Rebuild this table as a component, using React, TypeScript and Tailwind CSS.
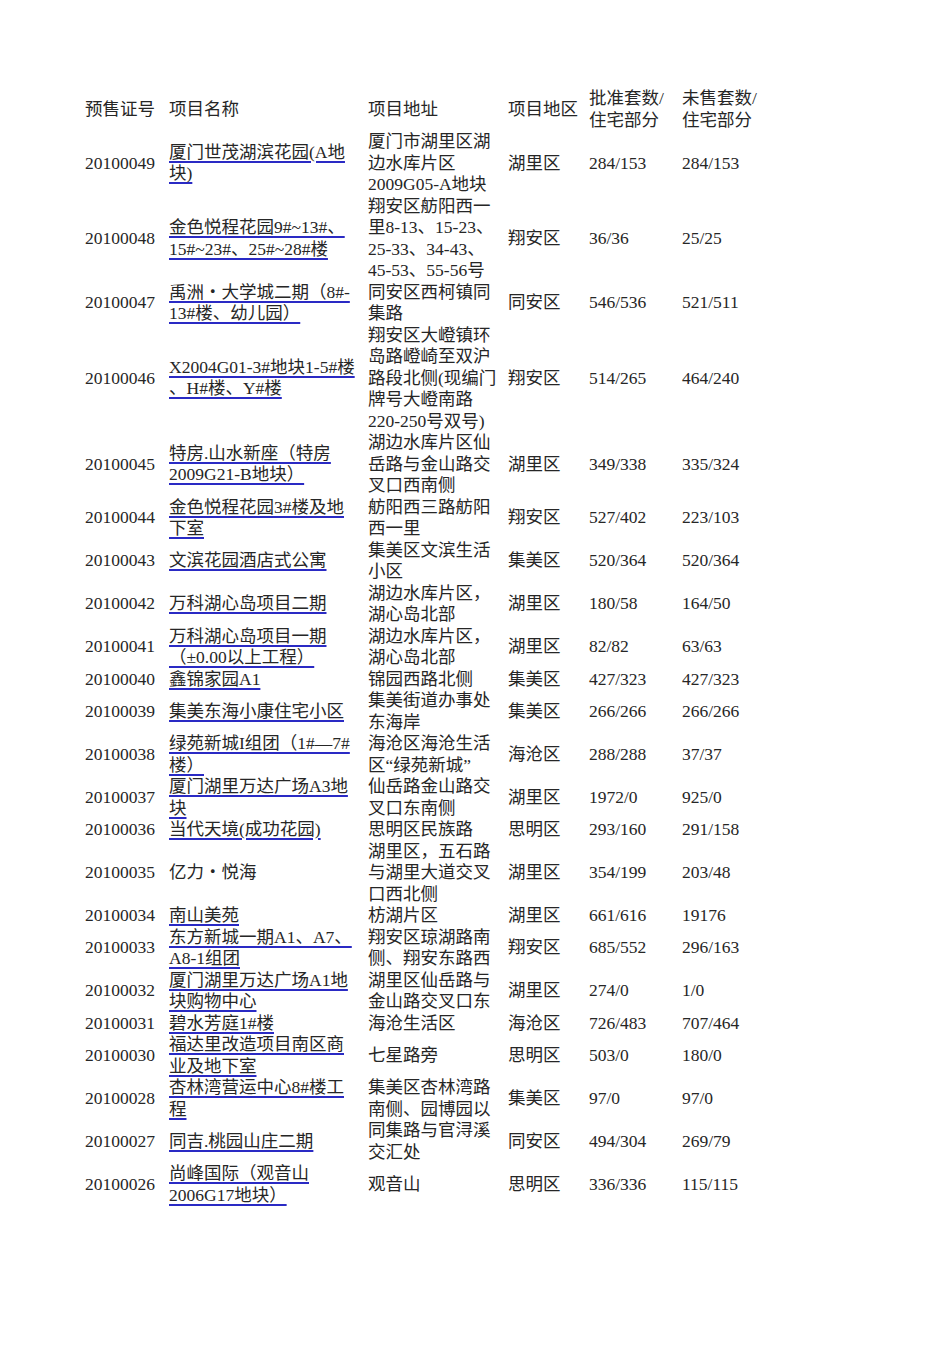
import React from 'react';

type Row = {
  no: string;
  name: string[];
  link?: boolean;
  addr: string[];
  area: string;
  approved: string;
  unsold: string;
};

// 预售项目列表 (lines are broken by hand, as in the source sheet)
const rows: Row[] = [
  { no: '20100049', name: ['厦门世茂湖滨花园(A地', '块)'], addr: ['厦门市湖里区湖', '边水库片区', '2009G05-A地块'], area: '湖里区', approved: '284/153', unsold: '284/153' },
  { no: '20100048', name: ['金色悦程花园9#~13#、', '15#~23#、25#~28#楼'], addr: ['翔安区舫阳西一', '里8-13、15-23、', '25-33、34-43、', '45-53、55-56号'], area: '翔安区', approved: '36/36', unsold: '25/25' },
  { no: '20100047', name: ['禹洲・大学城二期（8#-', '13#楼、幼儿园）'], addr: ['同安区西柯镇同', '集路'], area: '同安区', approved: '546/536', unsold: '521/511' },
  { no: '20100046', name: ['X2004G01-3#地块1-5#楼', '、H#楼、Y#楼'], addr: ['翔安区大嶝镇环', '岛路嶝崎至双沪', '路段北侧(现编门', '牌号大嶝南路', '220-250号双号)'], area: '翔安区', approved: '514/265', unsold: '464/240' },
  { no: '20100045', name: ['特房.山水新座（特房', '2009G21-B地块）'], addr: ['湖边水库片区仙', '岳路与金山路交', '叉口西南侧'], area: '湖里区', approved: '349/338', unsold: '335/324' },
  { no: '20100044', name: ['金色悦程花园3#楼及地', '下室'], addr: ['舫阳西三路舫阳', '西一里'], area: '翔安区', approved: '527/402', unsold: '223/103' },
  { no: '20100043', name: ['文滨花园酒店式公寓'], addr: ['集美区文滨生活', '小区'], area: '集美区', approved: '520/364', unsold: '520/364' },
  { no: '20100042', name: ['万科湖心岛项目二期'], addr: ['湖边水库片区，', '湖心岛北部'], area: '湖里区', approved: '180/58', unsold: '164/50' },
  { no: '20100041', name: ['万科湖心岛项目一期', '（±0.00以上工程）'], addr: ['湖边水库片区，', '湖心岛北部'], area: '湖里区', approved: '82/82', unsold: '63/63' },
  { no: '20100040', name: ['鑫锦家园A1'], addr: ['锦园西路北侧'], area: '集美区', approved: '427/323', unsold: '427/323' },
  { no: '20100039', name: ['集美东海小康住宅小区'], addr: ['集美街道办事处', '东海岸'], area: '集美区', approved: '266/266', unsold: '266/266' },
  { no: '20100038', name: ['绿苑新城I组团（1#—7#', '楼）'], addr: ['海沧区海沧生活', '区“绿苑新城”'], area: '海沧区', approved: '288/288', unsold: '37/37' },
  { no: '20100037', name: ['厦门湖里万达广场A3地', '块'], addr: ['仙岳路金山路交', '叉口东南侧'], area: '湖里区', approved: '1972/0', unsold: '925/0' },
  { no: '20100036', name: ['当代天境(成功花园)'], addr: ['思明区民族路'], area: '思明区', approved: '293/160', unsold: '291/158' },
  { no: '20100035', name: ['亿力・悦海'], link: false, addr: ['湖里区，五石路', '与湖里大道交叉', '口西北侧'], area: '湖里区', approved: '354/199', unsold: '203/48' },
  { no: '20100034', name: ['南山美苑'], addr: ['枋湖片区'], area: '湖里区', approved: '661/616', unsold: '19176' },
  { no: '20100033', name: ['东方新城一期A1、A7、', 'A8-1组团'], addr: ['翔安区琼湖路南', '侧、翔安东路西'], area: '翔安区', approved: '685/552', unsold: '296/163' },
  { no: '20100032', name: ['厦门湖里万达广场A1地', '块购物中心'], addr: ['湖里区仙岳路与', '金山路交叉口东'], area: '湖里区', approved: '274/0', unsold: '1/0' },
  { no: '20100031', name: ['碧水芳庭1#楼'], addr: ['海沧生活区'], area: '海沧区', approved: '726/483', unsold: '707/464' },
  { no: '20100030', name: ['福达里改造项目南区商', '业及地下室'], addr: ['七星路旁'], area: '思明区', approved: '503/0', unsold: '180/0' },
  { no: '20100028', name: ['杏林湾营运中心8#楼工', '程'], addr: ['集美区杏林湾路', '南侧、园博园以'], area: '集美区', approved: '97/0', unsold: '97/0' },
  { no: '20100027', name: ['同吉.桃园山庄二期'], addr: ['同集路与官浔溪', '交汇处'], area: '同安区', approved: '494/304', unsold: '269/79' },
  { no: '20100026', name: ['尚峰国际（观音山', '2006G17地块）'], addr: ['观音山'], area: '思明区', approved: '336/336', unsold: '115/115' },
];

const Lines = ({ lines, link }: { lines: string[]; link?: boolean }) => (
  <>
    {lines.map((l, i) => (
      <div key={i} className="whitespace-nowrap">
        <span className={link ? 'underline decoration-[#2a2ac4] decoration-2 underline-offset-[3px]' : ''}>{l}</span>
      </div>
    ))}
  </>
);

const App = () => {
  return (
    <div
      className="min-h-[1345px] w-[950px] bg-white pt-[88px] pl-[85px] text-[17.5px] leading-[21.5px] text-[#262626]"
      style={{ fontFamily: '"Liberation Serif", "Noto Sans CJK SC", serif' }}
    >
      <table className="table-fixed">
        <colgroup>
          <col className="w-[84px]" />
          <col className="w-[199px]" />
          <col className="w-[140px]" />
          <col className="w-[81px]" />
          <col className="w-[93px]" />
          <col className="w-[100px]" />
        </colgroup>
        <thead>
          <tr className="align-middle">
            <th className="p-0 text-left font-normal">预售证号</th>
            <th className="p-0 text-left font-normal">项目名称</th>
            <th className="p-0 text-left font-normal">项目地址</th>
            <th className="p-0 text-left font-normal">项目地区</th>
            <th className="p-0 text-left font-normal">
              <div className="whitespace-nowrap">批准套数/</div>
              <div className="whitespace-nowrap">住宅部分</div>
            </th>
            <th className="p-0 text-left font-normal">
              <div className="whitespace-nowrap">未售套数/</div>
              <div className="whitespace-nowrap">住宅部分</div>
            </th>
          </tr>
        </thead>
        <tbody>
          {rows.map((r) => (
            <tr key={r.no} className="align-middle">
              <td className="p-0">{r.no}</td>
              <td className="p-0">
                <Lines lines={r.name} link={r.link !== false} />
              </td>
              <td className="p-0">
                <Lines lines={r.addr} />
              </td>
              <td className="p-0">{r.area}</td>
              <td className="p-0">{r.approved}</td>
              <td className="p-0">{r.unsold}</td>
            </tr>
          ))}
        </tbody>
      </table>
    </div>
  );
};

export default App;
